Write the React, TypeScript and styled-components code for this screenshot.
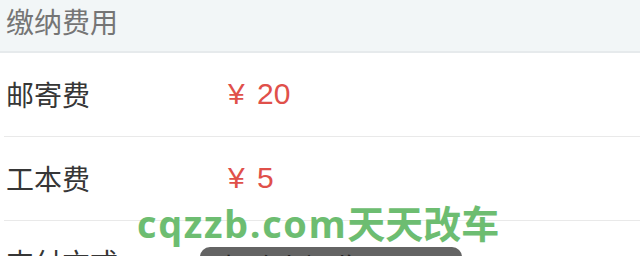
import React from "react";
import styled, { createGlobalStyle } from "styled-components";

const Global = createGlobalStyle`
  html, body { margin: 0; padding: 0; background: #ffffff; }
  body { overflow: hidden; font-family: "Noto Sans CJK SC", "Noto Sans", sans-serif; }
`;

const Page = styled.div`
  position: relative;
  width: 640px;
  height: 256px;
  overflow: hidden;
  background: #ffffff;
`;

const SectionHeader = styled.div`
  border-bottom: 2px solid #e6eaec;
  background: #f2f6f7;
  display: flex;
  align-items: center;
  padding: 0 0 9px 6px;
  box-sizing: border-box;
  height: 53px;
  font-size: 28px;
  color: #757575;
`;

const Row = styled.div`
  height: 84px;
  box-sizing: border-box;
  margin-left: 4px;
  padding-left: 2px;
  border-bottom: 1px solid #e9e9e9;
  display: flex;
  align-items: center;
`;

const Label = styled.div`
  width: 222px;
  font-size: 28px;
  color: #363636;
  padding-bottom: 2px;
`;

const Value = styled.div`
  font-family: "Liberation Sans", "Noto Sans CJK SC", sans-serif;
  font-size: 30px;
  word-spacing: 4px;
  color: #e0504a;
  padding-bottom: 2px;
`;

const Toast = styled.div`
  position: absolute;
  left: 200px;
  top: 247px;
  width: 262px;
  height: 40px;
  border-radius: 10px;
  background: #646464;
  color: #222222;
  font-size: 28px;
  padding: 0 0 0 20px;
  box-sizing: border-box;
  line-height: 40px;
`;

const Watermark = styled.div`
  position: absolute;
  left: 137px;
  top: 199px;
  font-size: 38px;
  font-weight: 700;
  color: #6dbd71;
  white-space: nowrap;
  line-height: 46px;
`;

const Latin = styled.span`
  font-family: "Open Sans", "Noto Sans", sans-serif;
  font-weight: 700;
  letter-spacing: 1.6px;
`;

const fees = [
  { label: "邮寄费", value: "¥ 20" },
  { label: "工本费", value: "¥ 5" },
];

export default function App() {
  return (
    <Page>
      <Global />
      <SectionHeader>缴纳费用</SectionHeader>
      {fees.map((f) => (
        <Row key={f.label}>
          <Label>{f.label}</Label>
          <Value>{f.value}</Value>
        </Row>
      ))}
      <Row>
        <Label>支付方式</Label>
      </Row>
      <Toast>邮政上门收取</Toast>
      <Watermark>
        <Latin>cqzzb.com</Latin>天天改车
      </Watermark>
    </Page>
  );
}
